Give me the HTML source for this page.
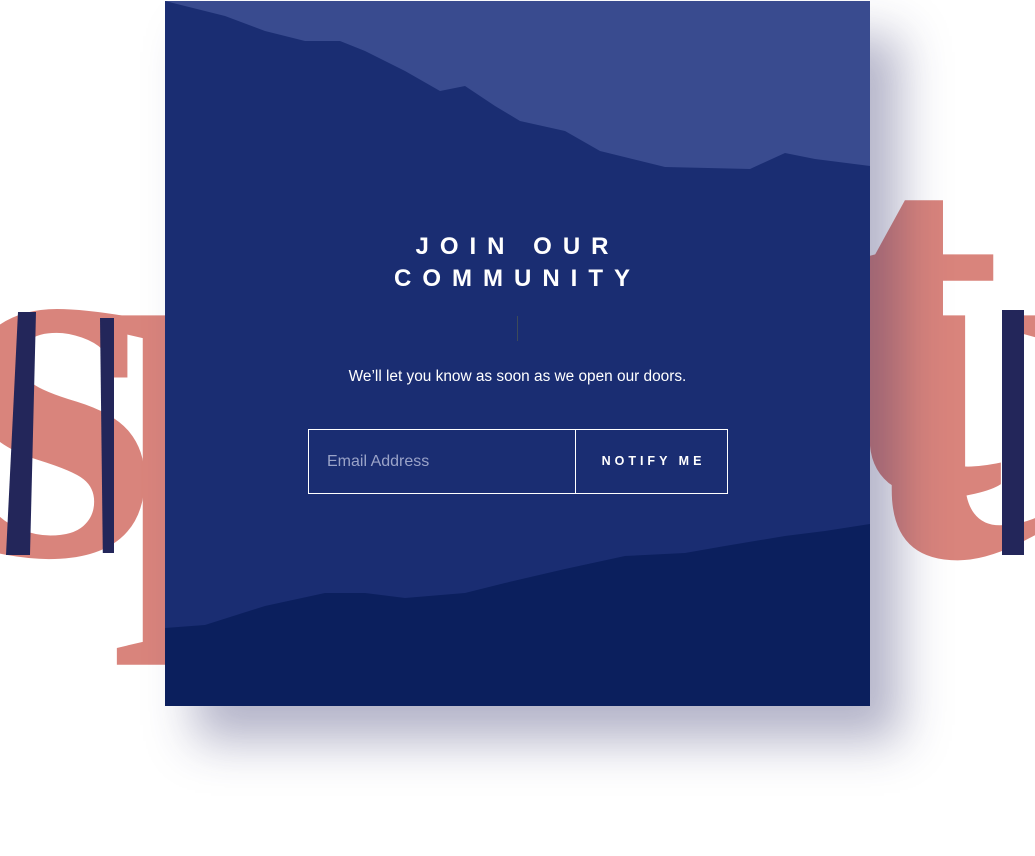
<!DOCTYPE html>
<html><head><style>
*{margin:0;padding:0;box-sizing:border-box}
body{width:1035px;height:856px;background:#fff;position:relative;overflow:hidden;font-family:"Liberation Sans",sans-serif}
.big{position:absolute;font-family:"Liberation Serif",serif;font-weight:bold;color:#d9847c;line-height:1;font-size:520px}
.card{position:absolute;left:165px;top:1px;width:705px;height:705px;background:#1a2d72;box-shadow:30px 35px 45px rgba(40,40,100,.35);overflow:hidden}
.t{position:absolute;left:0;width:100%;text-align:center;color:#fff;font-weight:bold;letter-spacing:11px;font-size:24px}
</style></head><body>
<div class="big" style="left:-45px;top:120px">s</div>
<div style="position:absolute;left:6px;top:312px;width:30px;height:243px;background:#23265a;clip-path:polygon(40% 0,100% 0,80% 100%,0 100%)"></div>
<div style="position:absolute;left:100px;top:318px;width:14px;height:235px;background:#23265a;clip-path:polygon(0 0,100% 0,100% 100%,20% 100%)"></div>
<div class="big" style="left:110px;top:120px">p</div>
<div class="big" style="left:830px;top:59px">t</div>
<div class="big" style="left:860px;top:120px">u</div>
<div style="position:absolute;left:1002px;top:310px;width:22px;height:245px;background:#23265a"></div>
<div class="card">
<svg width="705" height="705" style="position:absolute;left:0;top:0">
<polygon fill="#394b8f" points="0,0 705,0 705,165 650,158 620,152 585,168 500,166 435,150 400,130 355,120 330,105 300,85 275,90 240,70 200,50 175,40 140,40 100,30 60,15 20,5 0,0"/>
<polygon fill="#0b1f5d" points="0,627 40,624 100,605 160,592 200,592 240,597 300,592 340,582 400,568 460,555 520,552 560,545 620,535 660,530 705,523 705,705 0,705"/>
</svg>
<div class="t" style="top:232px">JOIN OUR</div>
<div class="t" style="top:264px">COMMUNITY</div>
<div style="position:absolute;left:352px;top:315px;width:1px;height:25px;background:#3d4a5a"></div>
<div style="position:absolute;left:0;width:100%;top:367px;text-align:center;color:#fff;font-size:15.4px">We’ll let you know as soon as we open our doors.</div>
<div style="position:absolute;left:143px;top:428px;width:420px;height:65px;border:1px solid #fff">
<div style="position:absolute;left:18px;top:23px;color:#9aa3c8;font-size:16px">Email Address</div>
<div style="position:absolute;left:266px;top:0;width:1px;height:63px;background:#fff"></div>
<div style="position:absolute;left:267px;top:24px;width:151px;text-align:center;color:#fff;font-weight:bold;font-size:12.5px;letter-spacing:4px;padding-left:4px">NOTIFY ME</div>
</div>
</div>
</body></html>
